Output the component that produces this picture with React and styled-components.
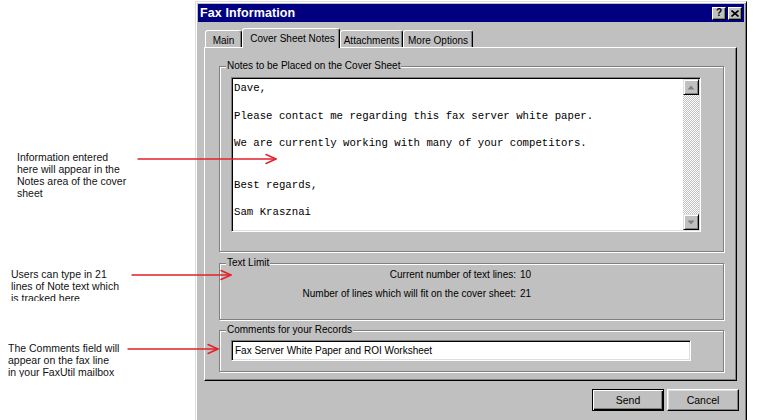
import React from 'react';
import styled, { createGlobalStyle } from 'styled-components';

const GlobalStyle = createGlobalStyle`
  html, body { margin: 0; padding: 0; background: #ffffff; }
  body {
    width: 757px;
    height: 420px;
    overflow: hidden;
    font-family: "Liberation Sans", Arial, sans-serif;
  }
`;

const Page = styled.div`
  position: relative;
  display: flex;
  width: 757px;
  height: 420px;
  overflow: hidden;
`;

const Annotations = styled.div`
  flex: none;
  width: 195px;
  display: flex;
  flex-direction: column;
`;

const Note = styled.p`
  margin: ${(p) => p.$gap}px 0 0 ${(p) => p.$indent}px;
  height: ${(p) => p.$height}px;
  overflow: hidden;
  font-size: 10.5px;
  line-height: 12px;
  color: #111;
  white-space: nowrap;
`;

const Arrows = styled.svg`
  position: absolute;
  left: 0;
  top: 0;
  width: 757px;
  height: 420px;
  pointer-events: none;
  z-index: 10;
`;

const Dialog = styled.div`
  flex: none;
  box-sizing: border-box;
  width: 552px;
  height: 430px;
  margin-top: 1px;
  padding: 2px;
  background: #c0c0c0;
  border: 1px solid;
  border-color: #dfdfdf #000 #000 #dfdfdf;
  box-shadow: inset 1px 1px #fff, inset -1px -1px #808080;
  display: flex;
  flex-direction: column;
`;

const TitleBar = styled.div`
  height: 18px;
  background: #000080;
  display: flex;
  align-items: center;
  padding: 0 2px;
  color: #fff;
  font-weight: bold;
  font-size: 12.5px;
`;

const TitleText = styled.span`
  flex: 1;
  letter-spacing: 0.1px;
`;

const CaptionButtons = styled.div`
  display: flex;
  gap: 2px;
`;

const CaptionButton = styled.div`
  box-sizing: border-box;
  width: 14px;
  height: 13px;
  background: #c0c0c0;
  border: 1px solid;
  border-color: #fff #000 #000 #fff;
  box-shadow: inset -1px -1px #808080;
  display: flex;
  align-items: center;
  justify-content: center;
  color: #000;
  font-size: 10px;
  font-weight: bold;
  line-height: 1;
`;

const Body = styled.div`
  padding: 6px 7px 0 6px;
  display: flex;
  flex-direction: column;
`;

const TabStrip = styled.div`
  display: flex;
  align-items: flex-end;
  height: 19px;
  padding-left: 1px;
  position: relative;
  z-index: 2;
`;

const Tab = styled.div`
  box-sizing: border-box;
  width: ${(p) => p.$w}px;
  height: ${(p) => (p.$active ? 20 : 17)}px;
  margin-bottom: ${(p) => (p.$active ? -1 : 0)}px;
  padding-top: ${(p) => (p.$active ? 0 : 2)}px;
  padding-left: ${(p) => (p.$active ? 3 : 0)}px;
  background: #c0c0c0;
  border-top: 1px solid #fff;
  border-left: 1px solid #fff;
  border-right: 1px solid #000;
  box-shadow: inset -1px 0 #808080;
  border-radius: 3px 3px 0 0;
  display: flex;
  align-items: center;
  justify-content: center;
  font-size: 10px;
  color: #000;
  white-space: nowrap;
`;

const Panel = styled.div`
  box-sizing: border-box;
  height: 334px;
  padding: 18px 12px 8px 14px;
  border: 1px solid;
  border-color: #fff #000 #000 #fff;
  box-shadow: inset -1px -1px #808080;
  display: flex;
  flex-direction: column;
`;

const Group = styled.div`
  position: relative;
  box-sizing: border-box;
  height: ${(p) => p.$h}px;
  margin-top: ${(p) => p.$gap || 0}px;
  border: 1px solid #808080;
  box-shadow: inset 1px 1px #fff, 1px 1px #fff;
  padding: ${(p) => p.$pad};
`;

const Legend = styled.span`
  position: absolute;
  top: -7px;
  left: 6px;
  padding: 0 1px;
  background: #c0c0c0;
  font-size: 10px;
  line-height: 12px;
  color: #000;
  white-space: nowrap;
`;

const NotesArea = styled.div`
  box-sizing: border-box;
  width: 470px;
  height: 155px;
  background: #fff;
  border: 1px solid;
  border-color: #808080 #fff #fff #808080;
  box-shadow: inset 1px 1px #000, inset -1px -1px #dfdfdf;
  padding: 1px;
  display: flex;
`;

const NotesText = styled.div`
  flex: 1;
  padding: 3px 0 0 1px;
  font-family: "Liberation Mono", "Courier New", monospace;
  font-size: 10.7px;
  line-height: 13.8px;
  color: #000;
  white-space: pre;
`;

const Scrollbar = styled.div`
  flex: none;
  width: 16px;
  display: flex;
  flex-direction: column;
  background-color: #fff;
  background-image: repeating-conic-gradient(#c0c0c0 0 25%, #ffffff 0 50%);
  background-size: 2px 2px;
`;

const ScrollButton = styled.div`
  box-sizing: border-box;
  width: 16px;
  height: 16px;
  background: #c0c0c0;
  border: 1px solid;
  border-color: #dfdfdf #000 #000 #dfdfdf;
  box-shadow: inset 1px 1px #fff, inset -1px -1px #808080;
  display: flex;
  align-items: center;
  justify-content: center;
`;

const Track = styled.div`
  flex: 1;
`;

const LimitGrid = styled.div`
  display: grid;
  grid-template-columns: 296px auto;
  column-gap: 4px;
  row-gap: 7px;
  font-size: 10px;
  line-height: 12px;
  color: #000;
`;

const LimitLabel = styled.span`
  text-align: right;
  white-space: nowrap;
`;

const LimitValue = styled.span`
  white-space: nowrap;
`;

const TextInput = styled.div`
  box-sizing: border-box;
  width: 460px;
  height: 21px;
  background: #fff;
  border: 1px solid;
  border-color: #808080 #fff #fff #808080;
  box-shadow: inset 1px 1px #000, inset -1px -1px #dfdfdf;
  padding: 0 3px;
  display: flex;
  align-items: center;
  font-size: 10px;
  color: #000;
  white-space: nowrap;
`;

const ButtonRow = styled.div`
  display: flex;
  justify-content: flex-end;
  gap: 3px;
  margin-top: 8px;
  margin-right: -2px;
`;

const Button = styled.div`
  box-sizing: border-box;
  width: 72px;
  height: 22px;
  background: #c0c0c0;
  border: 1px solid;
  border-color: ${(p) => (p.$default ? '#000' : '#fff #000 #000 #fff')};
  box-shadow: ${(p) =>
    p.$default
      ? 'inset 1px 1px #fff, inset -1px -1px #000, inset -2px -2px #808080'
      : 'inset -1px -1px #808080, inset 1px 1px #dfdfdf'};
  display: flex;
  align-items: center;
  justify-content: center;
  font-size: 10.5px;
  color: #000;
`;

const ArrowUp = () => (
  <svg width="8" height="5" viewBox="0 0 8 5">
    <path d="M4 0.5 L7.5 4.5 L0.5 4.5 Z" fill="#808080" />
  </svg>
);

const ArrowDown = () => (
  <svg width="8" height="5" viewBox="0 0 8 5">
    <path d="M0.5 0.5 L7.5 0.5 L4 4.5 Z" fill="#808080" />
  </svg>
);

const CloseGlyph = () => (
  <svg width="8" height="7" viewBox="0 0 8 7">
    <path d="M0.5 0.5 L7.5 6.5 M7.5 0.5 L0.5 6.5" stroke="#000" strokeWidth="1.6" />
  </svg>
);

const Callout = ({ x1, x2, y }) => (
  <g stroke="#e4202a" strokeWidth="1.4" fill="none" strokeLinecap="round" strokeLinejoin="round">
    <line x1={x1} y1={y} x2={x2} y2={y} />
    <polyline points={`${x2 - 10},${y - 4.5} ${x2},${y} ${x2 - 10},${y + 4.5}`} />
  </g>
);

const noteLines = [
  'Dave,',
  '',
  'Please contact me regarding this fax server white paper.',
  '',
  'We are currently working with many of your competitors.',
  '',
  '',
  'Best regards,',
  '',
  'Sam Krasznai',
].join('\n');

export default function App() {
  return (
    <Page>
      <GlobalStyle />
      <Annotations>
        <Note $gap={151} $indent={17} $height={48}>
          Information entered
          <br />
          here will appear in the
          <br />
          Notes area of the cover
          <br />
          sheet
        </Note>
        <Note $gap={69} $indent={11} $height={33}>
          Users can type in 21
          <br />
          lines of Note text which
          <br />
          is tracked here
        </Note>
        <Note $gap={41} $indent={8} $height={35}>
          The Comments field will
          <br />
          appear on the fax line
          <br />
          in your FaxUtil mailbox
        </Note>
      </Annotations>

      <Dialog>
        <TitleBar>
          <TitleText>Fax Information</TitleText>
          <CaptionButtons>
            <CaptionButton>?</CaptionButton>
            <CaptionButton>
              <CloseGlyph />
            </CaptionButton>
          </CaptionButtons>
        </TitleBar>

        <Body>
          <TabStrip>
            <Tab $w={37}>Main</Tab>
            <Tab $w={98} $active>
              Cover Sheet Notes
            </Tab>
            <Tab $w={63}>Attachments</Tab>
            <Tab $w={70}>More Options</Tab>
          </TabStrip>

          <Panel>
            <Group $h={186} $pad="10px 0 0 11px">
              <Legend>Notes to be Placed on the Cover Sheet</Legend>
              <NotesArea>
                <NotesText>{noteLines}</NotesText>
                <Scrollbar>
                  <ScrollButton>
                    <ArrowUp />
                  </ScrollButton>
                  <Track />
                  <ScrollButton>
                    <ArrowDown />
                  </ScrollButton>
                </Scrollbar>
              </NotesArea>
            </Group>

            <Group $h={57} $gap={11} $pad="5px 0 0 0">
              <Legend>Text Limit</Legend>
              <LimitGrid>
                <LimitLabel>Current number of text lines:</LimitLabel>
                <LimitValue>10</LimitValue>
                <LimitLabel>Number of lines which will fit on the cover sheet:</LimitLabel>
                <LimitValue>21</LimitValue>
              </LimitGrid>
            </Group>

            <Group $h={42} $gap={10} $pad="9px 0 0 11px">
              <Legend>Comments for your Records</Legend>
              <TextInput>Fax Server White Paper and ROI Worksheet</TextInput>
            </Group>
          </Panel>

          <ButtonRow>
            <Button $default>Send</Button>
            <Button>Cancel</Button>
          </ButtonRow>
        </Body>
      </Dialog>

      <Arrows viewBox="0 0 757 420">
        <Callout x1={138} x2={276} y={159} />
        <Callout x1={132} x2={231} y={275} />
        <Callout x1={128} x2={218} y={349} />
      </Arrows>
    </Page>
  );
}
